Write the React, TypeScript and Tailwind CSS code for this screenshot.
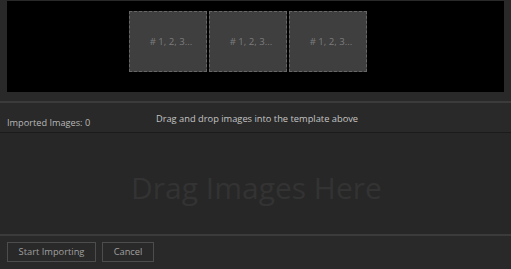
import React from "react";

export default function App() {
  const font = { fontFamily: '"Open Sans", "Noto Sans", sans-serif' };
  return (
    <div className="w-[511px] h-[269px] bg-[#292929] flex flex-col overflow-hidden" style={font}>
      <div className="mx-[7px] mt-[1px] h-[91px] bg-black flex pl-[122px] pt-[10px] gap-[2px]">
        {[0, 1, 2].map((i) => (
          <div
            key={i}
            className="w-[78px] h-[61px] bg-[#3f3f3f] border border-dashed border-[#666] flex items-center justify-center pl-[6px] pt-[2px] text-[9.6px] text-[#7d7d7d]"
          >
            # 1, 2, 3...
          </div>
        ))}
      </div>
      <div className="h-[9px]" />
      <div className="h-[2px] bg-[#3b3b3b]" />
      <div className="relative h-[29px]">
        <div className="absolute left-0 right-0 top-[9px] text-center text-[9.3px] leading-[14px] text-[#c4c4c4] pl-[3px]">
          Drag and drop images into the template above
        </div>
        <div className="absolute left-[7px] top-[13px] text-[9.2px] leading-[14px] text-[#b8b8b8]">
          Imported Images: 0
        </div>
      </div>
      <div className="h-[1px] bg-[#1b1b1b]" />
      <div className="h-[101px] bg-[#272727] flex items-center justify-center">
        <span className="text-[30px] leading-none text-[#333333] pl-[2px] mt-[8px]">Drag Images Here</span>
      </div>
      <div className="h-[2px] bg-[#3b3b3b]" />
      <div className="flex gap-[6px] pl-[7px] pt-[6px]">
        <div className="w-[89px] h-[20px] border border-[#4d4d4d] flex items-center justify-center text-[9.3px] text-[#a0a0a0]">
          Start Importing
        </div>
        <div className="w-[52px] h-[20px] border border-[#4d4d4d] flex items-center justify-center text-[9.3px] text-[#a0a0a0]">
          Cancel
        </div>
      </div>
    </div>
  );
}
